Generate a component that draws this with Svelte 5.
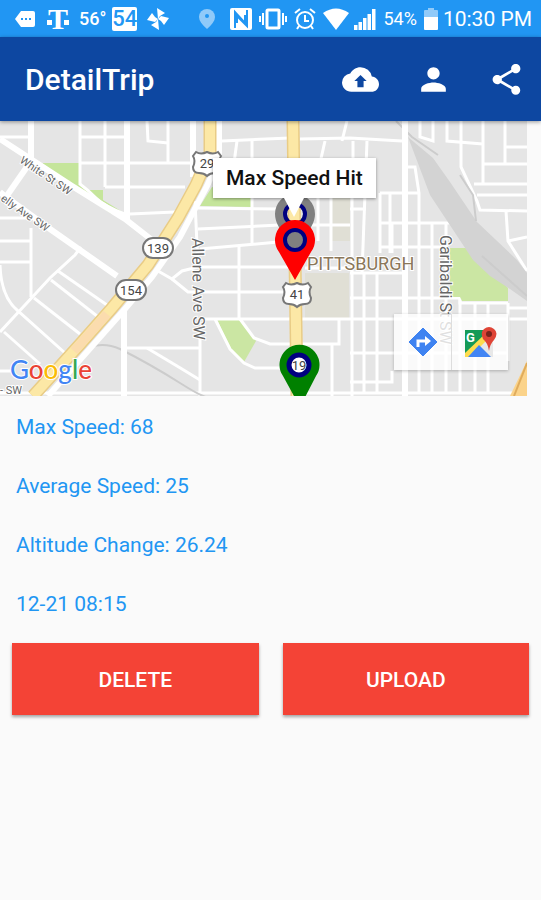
<script>
  const stats = [
    { label: "Max Speed", value: "68" },
    { label: "Average Speed", value: "25" },
    { label: "Altitude Change", value: "26.24" }
  ];

  const date = "12-21 08:15";

  const streets = [
    "M0 16H28", "M80 0V64", "M105 0V66", "M80 16H125", "M80 42H198", "M105 66H185",
    "M147 0L148 20L168 22", "M168 0V42", "M130 93L175 91", "M80 63Q88 69 96 77T127 94",
    "M31 107V176", "M0 97H31", "M0 120H31", "M0 141H31", "M81 126L75 134L50 157L0 211",
    "M0 144Q1 176 18 190L65 232", "M58 150L107 184", "M51 159L97 195", "M34 177L80 213",
    "M4 211L40 243", "M0 250H12", "M127 227H200", "M147 227L182 248L200 259",
    "M158 150L172 158L182 150L198 146H290", "M172 158L188 171H284",
    "M222 20L290 17", "M300 18L350 17L402 20", "M237 20L234 42", "M252 20V42",
    "M325 20L320 42", "M347 0L342 20", "M353 20V42", "M367 20L362 152",
    "M252 76V122", "M239 125V198", "M198 87L280 88", "M198 108L280 104", "M200 128L278 121",
    "M195 80L198 146", "M205 198H527", "M200 215V275", "M215 198L230 228L244 242L255 247H290",
    "M240 198L254 217L270 223H339V199", "M332 223V275", "M352 76V275", "M318 76V120", "M331 76V130",
    "M303 104H350", "M305 147H350", "M364 152V271", "M377 152V271",
    "M380 72H419", "M380 102H450", "M380 126H446", "M380 72V132", "M390 72V132", "M392 102V132", "M350 88H366",
    "M408 46H415L419 72V271", "M432 102V271", "M446 102V271", "M460 177V271", "M475 182V271",
    "M488 182V271", "M508 182V240", "M350 152H402", "M350 177H460V182H508", "M508 187H527",
    "M350 232H508", "M350 261H392V250", "M0 272H527",
    "M420 0V16L433 20V0", "M447 0V20L483 23", "M461 0V46L477 80L480 89L527 90", "M483 0V62",
    "M505 0V42", "M505 26H527", "M483 43H527", "M474 63H527", "M477 74H527", "M506 90L508 120L527 150",
    "M508 120L527 116"
  ];

  const avenues = [
    "M0 18L72 65L125 98L152 119", "M31 0V40L6 76", "M0 71L6 76L50 108L117 155",
    "M127 0V99", "M124 188V275", "M193 0V56", "M405 0V275"
  ];

  const routes = [
    { number: "139", x: 158, y: 127 },
    { number: "154", x: 131, y: 169 }
  ];

  const shields = [
    { number: "29", x: 207, y: 43 },
    { number: "41", x: 297, y: 174 }
  ];

  const signalBars = [5, 8, 12, 16, 21];
</script>

<div class="screen">
  <div class="status">
    <div class="group">
      <svg width="20" height="18" viewBox="0 0 20 18">
        <path d="M6 1h12q2 0 2 2v12q0 2-2 2H6L0 9z" fill="#fff" />
        <path d="M6 8h2v2H6zM10 8h2v2h-2zM14 8h2v2h-2z" fill="#2196f3" />
      </svg>
      <svg class="carrier" width="22" height="34" viewBox="0 0 22 34">
        <text x="11" y="27" text-anchor="middle">T</text>
        <path d="M0 18h5v5H0zM17 18h5v5h-5z" fill="#fff" />
      </svg>
      <span class="degrees">56°</span>
      <span class="badge">54</span>
      <svg width="22" height="22" viewBox="0 0 22 22" fill="#fff">
        <path d="M11 11L10 0L18 5L13 8Z" />
        <path d="M11 11L14 8L22 10L17 17L14 13Z" />
        <path d="M11 11L12 22L4 17L9 14Z" />
        <path d="M11 11L8 14L0 12L5 5L8 9Z" />
      </svg>
    </div>
    <div class="group right">
      <svg class="faded" width="18" height="22" viewBox="0 0 18 22">
        <path d="M9 1a8 8 0 0 1 8 8q0 5-8 12Q1 14 1 9a8 8 0 0 1 8-8z" fill="#fff" />
        <circle cx="9" cy="8" r="2" fill="#2196f3" />
      </svg>
      <svg width="22" height="22" viewBox="0 0 22 22">
        <rect width="22" height="22" rx="2" fill="#fff" />
        <path d="M5 20V4L15 15V7M17 2V18L7 8V15" fill="none" stroke="#2196f3" stroke-width="2" />
      </svg>
      <svg width="28" height="22" viewBox="0 0 28 22" fill="none" stroke="#fff" stroke-width="2">
        <rect x="8" y="2" width="12" height="18" rx="1" stroke-width="3" />
        <path d="M4 5v12M1 8v6M24 5v12M27 8v6" />
      </svg>
      <svg width="22" height="24" viewBox="0 0 22 24" fill="none" stroke="#fff" stroke-width="2">
        <circle cx="11" cy="13" r="8" />
        <path d="M11 8v6h4M1 6l5-4M21 6l-5-4M5 19l-2 3M17 19l2 3" />
      </svg>
      <svg class="wifi" width="26" height="22" viewBox="0 0 26 22">
        <path d="M0 5Q13-4 26 5L13 22z" fill="#fff" />
      </svg>
      <svg width="22" height="22" viewBox="0 0 22 22" fill="#fff">
        {#each signalBars as bar, i}
          <rect x={i * 4.5} y={22 - bar} width="3.5" height={bar} />
        {/each}
      </svg>
      <span class="percent">54%</span>
      <svg width="14" height="22" viewBox="0 0 14 22">
        <path d="M4 0h6v2h3q1 0 1 1v6H0V3q0-1 1-1h3z" fill="#90caf9" />
        <path d="M0 9h14v12q0 1-1 1H1q-1 0-1-1z" fill="#fff" />
      </svg>
      <span class="clock">10:30 PM</span>
    </div>
  </div>

  <header>
    <h1>DetailTrip</h1>
    <nav>
      <button aria-label="Upload to cloud">
        <svg width="37" height="37" viewBox="0 0 24 24" fill="#fff">
          <path d="M19.35 10.04A7.49 7.49 0 0 0 12 4C9.11 4 6.6 5.64 5.35 8.04A5.994 5.994 0 0 0 0 14c0 3.31 2.69 6 6 6h13c2.76 0 5-2.24 5-5 0-2.64-2.05-4.78-4.65-4.96zM14 13v4h-4v-4H8l4-4 4 4h-2z" />
        </svg>
      </button>
      <button aria-label="Profile">
        <svg width="37" height="37" viewBox="0 0 24 24" fill="#fff">
          <path d="M12 12c2.21 0 4-1.79 4-4s-1.79-4-4-4-4 1.79-4 4 1.79 4 4 4zm0 2c-2.67 0-8 1.34-8 4v2h16v-2c0-2.66-5.33-4-8-4z" />
        </svg>
      </button>
      <button aria-label="Share">
        <svg width="37" height="37" viewBox="0 0 24 24" fill="#fff">
          <path d="M18 16.08c-.76 0-1.44.3-1.96.77L8.91 12.7c.05-.23.09-.46.09-.7s-.04-.47-.09-.7l7.05-4.11c.54.5 1.25.81 2.04.81 1.66 0 3-1.34 3-3s-1.34-3-3-3-3 1.34-3 3c0 .24.04.47.09.7L8.04 9.81C7.5 9.31 6.79 9 6 9c-1.66 0-3 1.34-3 3s1.34 3 3 3c.79 0 1.5-.31 2.04-.81l7.12 4.16c-.05.21-.08.43-.08.65 0 1.61 1.31 2.92 2.92 2.92s2.92-1.31 2.92-2.92-1.31-2.92-2.92-2.92z" />
        </svg>
      </button>
    </nav>
  </header>

  <div class="map">
    <svg class="tiles" viewBox="0 0 527 275" preserveAspectRatio="xMidYMid slice">
      <rect width="527" height="275" fill="#e5e5e5" />
      <path d="M42 42H79V64L86 69H103V79L124 92V98L110 92L72 66Z" fill="#c5e59b" />
      <path d="M212 66L252 76V86L200 85Z" fill="#c5e59b" />
      <path d="M217 198H240L256 220L244 241L230 228Z" fill="#cbe6a3" />
      <path d="M305 152H349V198H305Z" fill="#e0dfd5" />
      <path d="M332 76H350V120H332Z" fill="#e0dfd5" />

      <g class="streets">
        {#each streets as d}
          <path {d} />
        {/each}
      </g>

      <!-- park and rail yard -->
      <path d="M450 127H470L508 167V180H462L460 176H450Z" fill="#cbe6a3" />
      <path d="M408 16L433 37L450 61L477 101L517 139L527 152V180L510 168L490 155L473 139L430 74Z" fill="#d3d3d3" />
      <path d="M396 0L412 16L438 34M460 54L473 74L476 100M482 135L527 175M90 226Q105 221 120 228Q150 243 180 262T210 275" fill="none" stroke="#ccc" stroke-width="2" />

      <g class="avenues">
        {#each avenues as d}
          <path {d} />
        {/each}
        <path d="M219 0V38L207 65L180 116L152 156L124 189L48 275" />
      </g>

      <g class="highways">
        <path class="edge" d="M210 0V32L196 64L178 97L148 144L112 187L82 221L33 275" />
        <path class="fill" d="M210 0V32L196 64L178 97L148 144L112 187L82 221L33 275" />
        <path class="busy" d="M107 193L74 230" />
        <path class="edge" d="M293 0L297 275" />
        <path class="fill" d="M293 0L297 275" />
        <path d="M527 240L510 275H527Z" fill="#fbd38a" />
        <path d="M527 242L514 275" stroke="#e0ac5c" stroke-width="2" />
      </g>

      <g class="labels">
        <text transform="translate(19 41) rotate(34)">White St SW</text>
        <text transform="translate(0 79) rotate(35)">elly Ave SW</text>
        <text class="street" transform="translate(192 117) rotate(89)">Allene Ave SW</text>
        <text class="street" transform="translate(440 114) rotate(90)">Garibaldi St SW</text>
        <text x="0" y="273">- SW</text>
        <text class="city" x="307" y="149">PITTSBURGH</text>
      </g>

      {#each routes as route}
        <g class="route" transform="translate({route.x} {route.y})">
          <rect x="-15" y="-10" width="30" height="20" rx="10" />
          <text y="5">{route.number}</text>
        </g>
      {/each}

      {#each shields as shield}
        <g class="route" transform="translate({shield.x} {shield.y})">
          <path d="M-11-12Q-6-9 0-12Q6-9 11-12L14-8Q11-3 14 3Q14 9 8 9Q3 9 0 12Q-3 9-8 9Q-14 9-14 3Q-11-3-14-8Z" />
          <text y="4">{shield.number}</text>
        </g>
      {/each}

      <path d="M295 133C292 120 275 108 275 93a20 20 0 0 1 40 0C315 108 298 120 295 133zM295 85a8 8 0 1 0 0 16a8 8 0 0 0 0-16z" fill="#808080" fill-rule="evenodd" />
      <circle cx="295" cy="93" r="10" fill="none" stroke="navy" stroke-width="4" />
      <path d="M295 159L279 131A20 20 0 1 1 311 131Z" fill="#f00" />
      <circle cx="295" cy="119" r="10" fill="#808080" stroke="navy" stroke-width="4" />
      <path d="M300 286L283 255A20 20 0 1 1 316 255Z" fill="green" />
      <circle cx="299" cy="244" r="10" fill="#fff" stroke="navy" stroke-width="5" />
      <text class="under" x="299" y="249">19</text>

      <text class="logo" x="10" y="258"><tspan fill="#4285f4">G</tspan><tspan fill="#ea4335">o</tspan><tspan fill="#fbbc05">o</tspan><tspan fill="#4285f4">g</tspan><tspan fill="#34a853">l</tspan><tspan fill="#ea4335">e</tspan></text>
    </svg>

    <div class="callout">Max Speed Hit</div>

    <div class="mapTools">
      <button aria-label="Directions">
        <svg width="30" height="30" viewBox="0 0 30 30">
          <path d="M15 1L29 15L15 29L1 15Z" fill="#3f83f1" stroke="#3f83f1" stroke-linejoin="round" />
          <path d="M10 20V14H18" fill="none" stroke="#fff" stroke-width="3" />
          <path d="M17 9L23 14L17 19Z" fill="#fff" />
        </svg>
      </button>
      <button aria-label="Open in Google Maps">
        <svg width="34" height="34" viewBox="0 0 34 34">
          <path d="M2 5H30V32H2Z" fill="#e8e8e8" />
          <path d="M2 5H25V12L2 31Z" fill="#159a57" />
          <path d="M2 32V28L22 9L25 14L7 32Z" fill="#fddc4e" />
          <path d="M5 32L16 20L28 32Z" fill="#4285f4" />
          <text class="g" x="3" y="17">G</text>
          <path d="M26 26Q25 18 20 14Q17 7 21 4Q26 0 31 4Q36 8 31 15Q27 19 26 26Z" fill="#df4436" />
          <circle cx="26" cy="9" r="3" fill="#7b231c" />
        </svg>
      </button>
    </div>
  </div>

  <main>
    {#each stats as stat}
      <p>{stat.label}: {stat.value}</p>
    {/each}
    <p>{date}</p>
  </main>

  <div class="actions">
    <button>DELETE</button>
    <button>UPLOAD</button>
  </div>
</div>

<style>
  :global(body) {
    margin: 0;
    background: #fafafa;
  }

  .screen {
    min-height: 100vh;
    background: #fafafa;
    font-family: Roboto, sans-serif;
  }

  svg {
    display: block;
    flex: none;
  }

  button {
    border: 0;
    padding: 0;
    background: none;
    font-family: inherit;
    cursor: pointer;
  }

  .status {
    display: flex;
    align-items: center;
    justify-content: space-between;
    height: 37px;
    padding: 0 9px 0 15px;
    background: #2196f3;
    color: #fff;
    font-size: 20px;
    white-space: nowrap;
  }

  .group {
    display: flex;
    align-items: center;
    gap: 10px;
  }

  .right {
    gap: 7px;
  }

  .carrier {
    margin-left: 2px;
  }

  .carrier text {
    font: bold 30px "Liberation Serif", serif;
    fill: #fff;
  }

  .degrees {
    font-size: 18px;
    font-weight: 500;
  }

  .badge {
    margin-left: -4px;
    border-radius: 2px;
    background: #fff;
    color: #2196f3;
    font-size: 22px;
    font-weight: 500;
    line-height: 24px;
  }

  .faded {
    opacity: 0.5;
    margin-right: 7px;
  }

  .wifi {
    margin-right: -2px;
  }

  .percent {
    font-size: 18px;
  }

  .clock {
    font-size: 21px;
    margin-left: -2px;
  }

  header {
    position: relative;
    z-index: 1;
    display: flex;
    align-items: center;
    justify-content: space-between;
    height: 84px;
    padding: 0 16px 0 25px;
    background: #0d47a1;
    box-shadow: 0 1px 4px rgba(0, 0, 0, 0.4);
  }

  h1 {
    margin: 0;
    color: #fff;
    font-size: 30px;
    font-weight: 500;
  }

  nav {
    display: flex;
    gap: 36px;
  }

  .map {
    position: relative;
    height: 275px;
    margin-right: 14px;
    overflow: hidden;
  }

  .tiles {
    width: 100%;
    height: 100%;
  }

  .streets path,
  .avenues path {
    fill: none;
    stroke: #fff;
    stroke-width: 3;
  }

  .avenues path {
    stroke-width: 6;
  }

  .highways .edge,
  .highways .fill,
  .highways .busy {
    fill: none;
    stroke: #e9cc86;
    stroke-width: 13;
  }

  .highways .fill {
    stroke: #fce8a6;
    stroke-width: 10;
  }

  .highways .busy {
    stroke: #fbdcae;
    stroke-width: 9;
  }

  .labels text {
    font-size: 11px;
    fill: #666;
    stroke: #fff;
    stroke-width: 2;
    paint-order: stroke;
  }

  .labels .street {
    font-size: 16px;
  }

  .labels .city {
    font-size: 18px;
    fill: #8a7659;
  }

  .route rect,
  .route path {
    fill: #fff;
    stroke: #777;
    stroke-width: 2;
  }

  .route text,
  .under {
    font-size: 13px;
    fill: #444;
    text-anchor: middle;
  }

  .logo {
    font: 500 26px Lato, sans-serif;
    stroke: #fff;
    stroke-width: 2;
    paint-order: stroke;
  }

  .callout {
    position: absolute;
    top: 37px;
    left: 213px;
    padding: 0 13px;
    background: #fff;
    box-shadow: 0 1px 3px rgba(0, 0, 0, 0.4);
    color: #111;
    font-size: 21px;
    font-weight: 500;
    line-height: 40px;
    white-space: nowrap;
  }

  .callout::after {
    content: "";
    position: absolute;
    top: 100%;
    left: 50%;
    margin-left: -10px;
    border: 10px solid transparent;
    border-top: 19px solid #fff;
    border-bottom: 0;
  }

  .mapTools {
    position: absolute;
    right: 19px;
    bottom: 26px;
    display: flex;
    background: rgba(255, 255, 255, 0.8);
    box-shadow: 0 1px 3px rgba(0, 0, 0, 0.25);
  }

  .mapTools button {
    display: grid;
    place-items: center;
    width: 57px;
    height: 56px;
  }

  .mapTools button + button {
    border-left: 1px solid #ddd;
  }

  .g {
    font: bold 13px Roboto, sans-serif;
    fill: #fff;
  }

  main {
    display: flex;
    flex-direction: column;
    gap: 33px;
    padding: 18px 16px 26px;
  }

  p {
    margin: 0;
    color: #2196f3;
    font-size: 21px;
    line-height: 26px;
  }

  .actions {
    display: flex;
    gap: 24px;
    padding: 0 12px;
  }

  .actions button {
    flex: 1;
    height: 72px;
    padding-top: 2px;
    background: #f44336;
    box-shadow: 0 2px 3px rgba(0, 0, 0, 0.35);
    color: #fff;
    font-size: 21px;
    font-weight: 500;
  }
</style>
